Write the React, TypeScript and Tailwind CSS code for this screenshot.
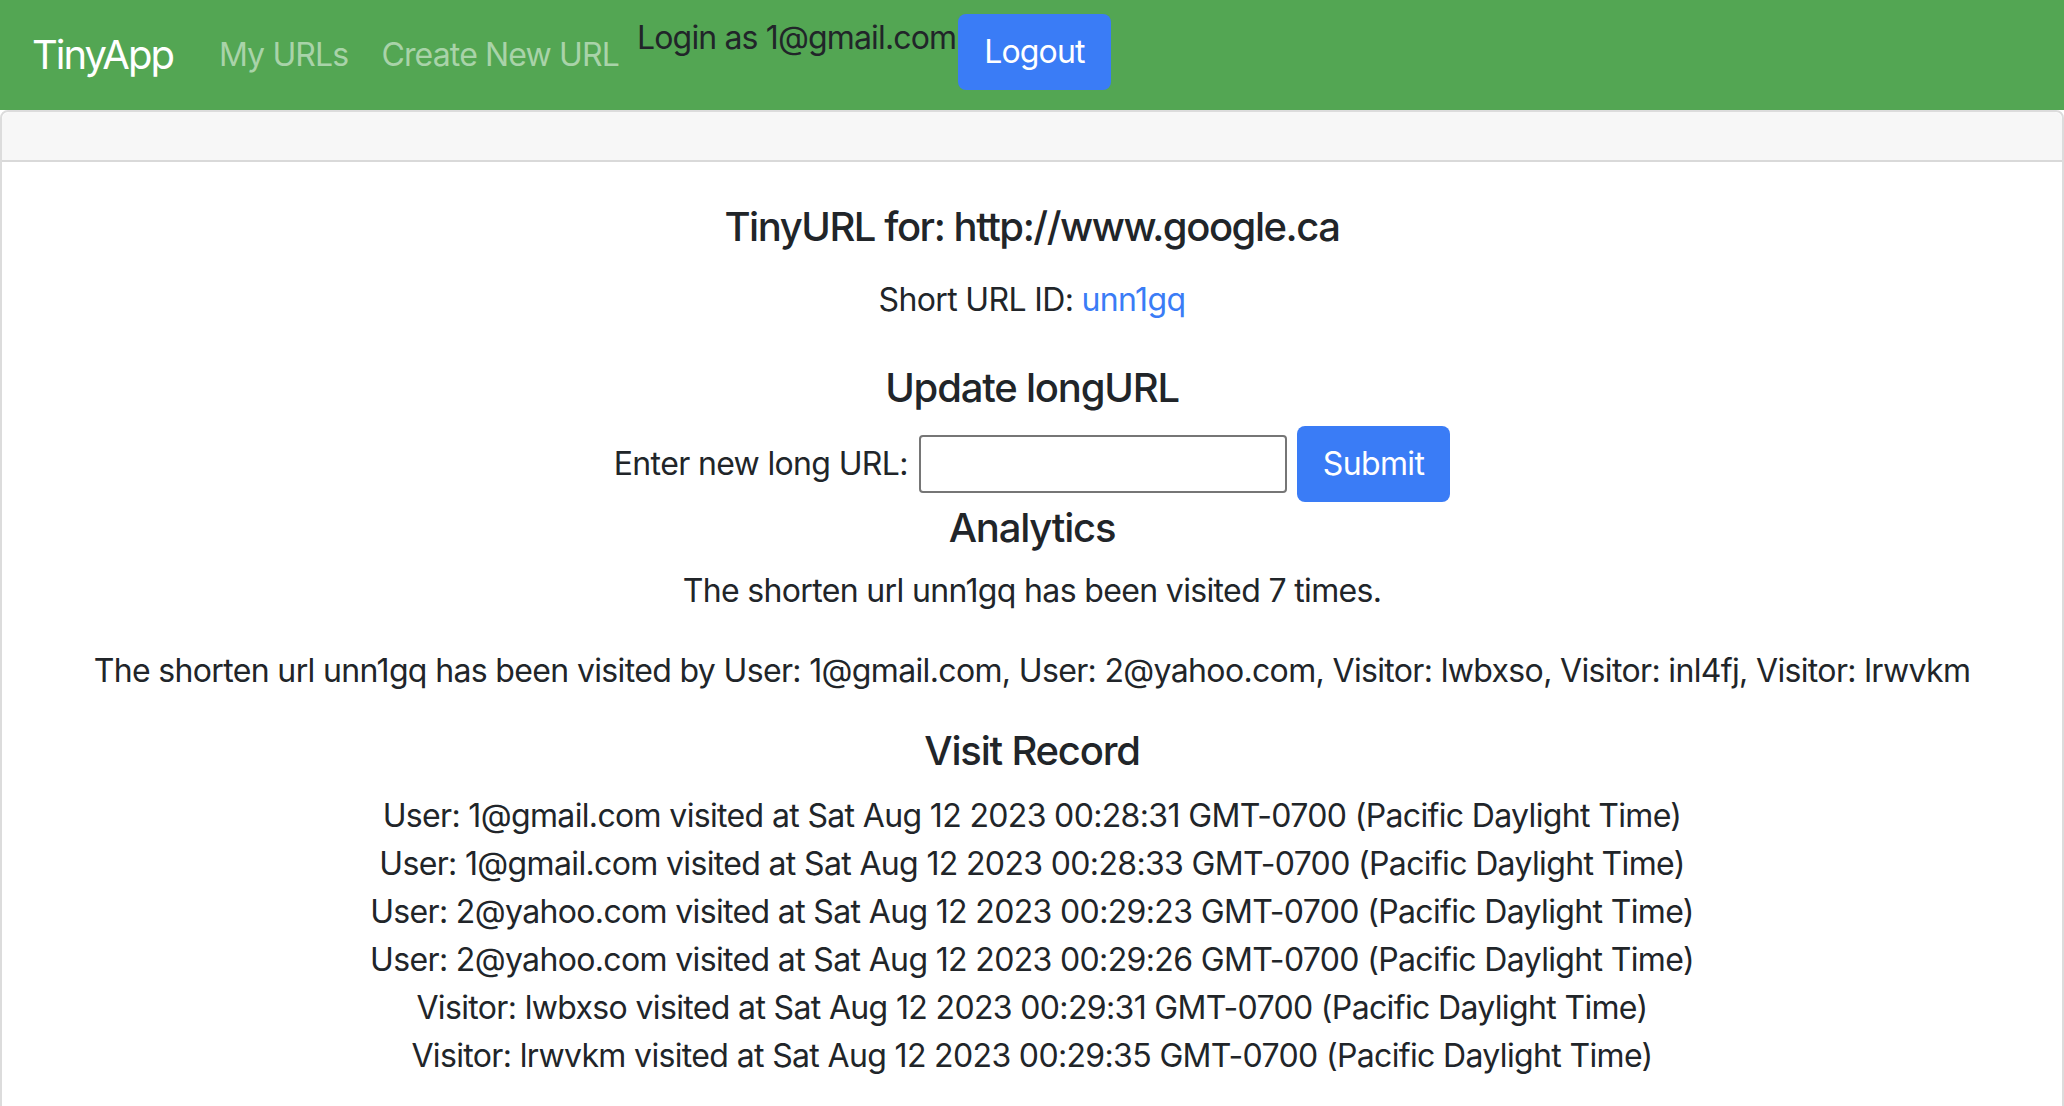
import React from 'react';

const visits = [
  'User: 1@gmail.com visited at Sat Aug 12 2023 00:28:31 GMT-0700 (Pacific Daylight Time)',
  'User: 1@gmail.com visited at Sat Aug 12 2023 00:28:33 GMT-0700 (Pacific Daylight Time)',
  'User: 2@yahoo.com visited at Sat Aug 12 2023 00:29:23 GMT-0700 (Pacific Daylight Time)',
  'User: 2@yahoo.com visited at Sat Aug 12 2023 00:29:26 GMT-0700 (Pacific Daylight Time)',
  'Visitor: lwbxso visited at Sat Aug 12 2023 00:29:31 GMT-0700 (Pacific Daylight Time)',
  'Visitor: lrwvkm visited at Sat Aug 12 2023 00:29:35 GMT-0700 (Pacific Daylight Time)',
];

const Navbar: React.FC = () => (
  <nav className="flex items-center h-[110px] px-[32px] bg-[#53a653] tracking-[-0.85px]">
    <span className="text-[40px] leading-[60px] text-white mr-[46px] tracking-[-2px]">TinyApp</span>
    <a className="text-[32px] leading-[48px] text-[#a9d3a9]">My URLs</a>
    <a className="text-[32px] leading-[48px] text-[#a9d3a9] ml-[33px]">Create New URL</a>
    <div className="flex items-start self-start mt-[14px] ml-[18px]">
      <span className="text-[32px] leading-[48px] text-[#212529]">Login as 1@gmail.com</span>
      <button className="h-[76px] px-[26px] ml-[2px] rounded-[8px] bg-[#3a7cf6] text-white text-[32px] leading-[48px]">
        Logout
      </button>
    </div>
  </nav>
);

export default function App() {
  return (
    <div className="min-h-screen bg-white text-[#212529] tracking-[-0.65px]" style={{ fontFamily: 'Inter, "Noto Sans", sans-serif' }}>
      <Navbar />

      {/* card */}
      <div className="border-2 border-[#dcdcdc] rounded-t-[8px] min-h-[996px]">
        <div className="h-[50px] bg-[#f7f7f7] border-b-2 border-[#d9d9d9] rounded-t-[8px]" />

        <div className="pt-[41px] pb-[40px] flex flex-col items-center text-center">
          <h5 className="text-[40px] leading-[48px] font-medium tracking-[-1.45px]">TinyURL for: http://www.google.ca</h5>
          <p className="text-[32px] leading-[48px] mt-[25px]">
            Short URL ID: <a className="text-[#3a7cf6]">unn1gq</a>
          </p>

          <h5 className="text-[40px] leading-[48px] font-medium tracking-[-1.2px] mt-[40px]">Update longURL</h5>
          <form className="flex items-center mt-[14px]">
            <label className="text-[32px] leading-[48px] mr-[11px]">Enter new long URL:</label>
            <input className="w-[368px] h-[58px] border-2 border-[#767676] rounded-[4px] bg-white" type="text" />
            <button type="button" className="h-[76px] px-[26px] ml-[10px] rounded-[8px] bg-[#3a7cf6] text-white text-[32px] leading-[48px]">
              Submit
            </button>
          </form>

          <h5 className="text-[40px] leading-[48px] font-medium tracking-[-1.2px] mt-[2px]">Analytics</h5>
          <p className="text-[32px] leading-[48px] mt-[15px]">The shorten url unn1gq has been visited 7 times.</p>
          <p className="text-[32px] leading-[48px] mt-[32px]">
            The shorten url unn1gq has been visited by User: 1@gmail.com, User: 2@yahoo.com, Visitor: lwbxso, Visitor: inl4fj, Visitor: lrwvkm
          </p>

          <h5 className="text-[40px] leading-[48px] font-medium tracking-[-1.2px] mt-[32px]">Visit Record</h5>
          <div className="mt-[17px]">
            {visits.map((v) => (
              <div key={v} className="text-[32px] leading-[48px]">{v}</div>
            ))}
          </div>
        </div>
      </div>
    </div>
  );
}
